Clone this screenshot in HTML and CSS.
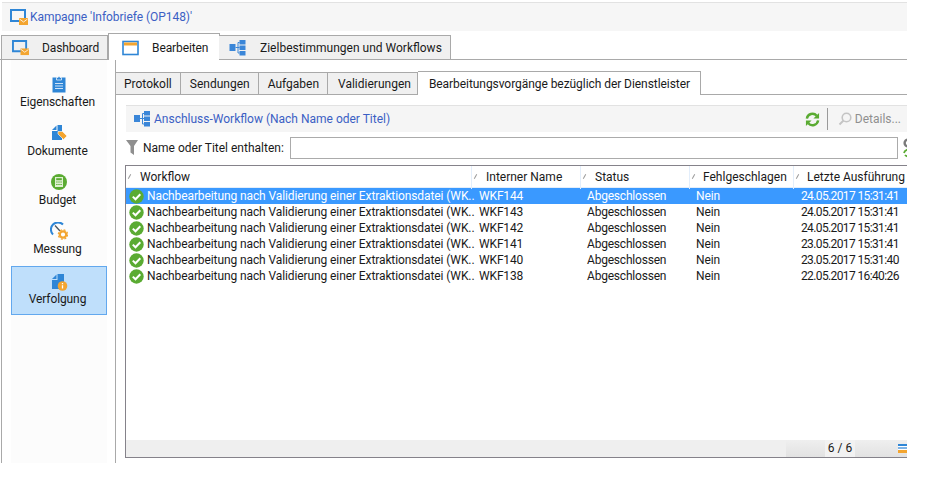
FILE: index.html
```html
<!DOCTYPE html>
<html lang="de">
<head>
<meta charset="utf-8">
<title>Kampagne</title>
<link rel="stylesheet" href="styles.css">
</head>
<body>
<svg class="defs" width="0" height="0" aria-hidden="true">
  <defs>
    <symbol id="flow" viewBox="0 0 16 16">
      <rect x="0" y="4" width="6" height="7" fill="#3a86d8"/>
      <path d="M6 7.5H8.5M8.5 2.5V13M8.5 2.5H10M8.5 7.5H10M8.5 13H10" stroke="#3a86d8" fill="none"/>
      <rect x="10" y="0" width="6" height="4.5" fill="#3a86d8"/>
      <rect x="10" y="5.5" width="6" height="4.5" fill="#3a86d8"/>
      <rect x="10" y="11" width="6" height="4.5" fill="#3a86d8"/>
    </symbol>
    <symbol id="monitor" viewBox="0 0 18 17">
      <path d="M1 1H15V12H1Z" fill="none" stroke="#2f86d6" stroke-width="2"/>
      <rect x="9" y="9" width="9" height="7" fill="#f3a530"/>
      <path d="M9.5 10l4 3 4-3" fill="none" stroke="#fff" stroke-width=".8"/>
    </symbol>
    <symbol id="ok" viewBox="0 0 15 15">
      <circle cx="7.5" cy="7.5" r="7.2" fill="#5aab32"/>
      <path d="M3.8 7.6l2.7 2.7 4.8-5" fill="none" stroke="#fff" stroke-width="2"/>
    </symbol>
  </defs>
</svg>
<div class="app">
  <header class="title">
    <svg class="ico-title"><use href="#monitor"/></svg>
    <span>Kampagne 'Infobriefe (OP148)'</span>
  </header>
  <nav class="tabs">
    <div class="tab tab-dash"><svg class="ico-tab"><use href="#monitor"/></svg>Dashboard</div>
    <div class="tab tab-edit active">
      <svg class="ico-tab" viewBox="0 0 17 15"><rect x="1" y="1" width="15" height="13" fill="#fff" stroke="#2f86d6" stroke-width="1.6"/><rect x="2" y="2" width="13" height="3" fill="#f3a530"/></svg>Bearbeiten
    </div>
    <div class="tab tab-goal"><svg class="ico-tab"><use href="#flow"/></svg>Zielbestimmungen und Workflows</div>
  </nav>
  <div class="body">
    <aside class="side">
      <div class="side-item">
        <svg class="side-ico" viewBox="0 0 18 18"><rect x="2.500" y="2.500" width="13" height="15" fill="#2f86d6"/><path d="M6.500 2.500H8a1 1 0 0 1 2 0h1.500V5h-5Z" fill="#2f86d6" stroke="#fff" stroke-width=".7"/><path d="M5 8.500h8M5 11h8M5 13.500h8" stroke="#cfe4f8"/></svg>
        <span>Eigenschaften</span>
      </div>
      <div class="side-item">
        <svg class="side-ico" viewBox="0 0 18 18"><path d="M2 6l4.500-4.500V6Z" fill="#2f86d6"/><path d="M7.500 1H12V16H2V7H7.500Z" fill="#2f86d6"/><path d="M8 10V7.500h4.500L17 12l-3.500 3.500Z" fill="#f3a530" stroke="#fff" stroke-width=".6"/></svg>
        <span>Dokumente</span>
      </div>
      <div class="side-item">
        <svg class="side-ico" viewBox="0 0 18 18"><circle cx="9" cy="9" r="8" fill="#5aab32"/><rect x="5" y="4" width="8" height="10" fill="#dff0d2"/><rect x="6.200" y="5.200" width="5.600" height="2" fill="#5aab32"/><path d="M6.200 9h5.600M6.200 11.500h5.600" stroke="#5aab32" stroke-dasharray="1.400 .7"/></svg>
        <span>Budget</span>
      </div>
      <div class="side-item">
        <svg class="side-ico" viewBox="0 0 18 18"><path d="M3 12.500A6.800 6.800 0 0 1 13 2.500" fill="none" stroke="#2f86d6" stroke-width="2"/><path d="M5 3.500l5 5.500" stroke="#4a5560" stroke-width="1.300"/><circle cx="13" cy="12.500" r="3.200" fill="#fff" stroke="#f3a530" stroke-width="2.200"/><circle cx="13" cy="12.500" r="4.700" fill="none" stroke="#f3a530" stroke-width="1.200" stroke-dasharray="2 1.700"/></svg>
        <span>Messung</span>
      </div>
      <div class="side-item selected">
        <svg class="side-ico" viewBox="0 0 18 18"><path d="M2 6l4.500-4.500V6Z" fill="#2f86d6"/><path d="M7.500 1H14V16H2V7H7.500Z" fill="#2f86d6"/><circle cx="12.500" cy="13" r="4.800" fill="#f3a530"/><path d="M12.500 10v1.300M12.500 12.300v3.200" stroke="#fff" stroke-width="1.300"/></svg>
        <span>Verfolgung</span>
      </div>
    </aside>
    <main class="main">
      <div class="subtabs">
        <div class="subtab">Protokoll</div>
        <div class="subtab">Sendungen</div>
        <div class="subtab">Aufgaben</div>
        <div class="subtab subtab-last">Validierungen</div>
        <div class="subtab active">Bearbeitungsvorgänge bezüglich der Dienstleister</div>
      </div>
      <div class="panel">
        <div class="toolbar">
          <svg class="ico-flow"><use href="#flow"/></svg>
          <span class="toolbar-title">Anschluss-Workflow (Nach Name oder Titel)</span>
          <svg class="ico-refresh" viewBox="0 0 16 16"><path d="M2 7A6 6 0 0 1 12.500 4M14 9A6 6 0 0 1 3.500 12" fill="none" stroke="#5aab32" stroke-width="2.600"/><path d="M15 1v6h-6ZM1 15V9h6Z" fill="#5aab32"/></svg>
          <span class="sep"></span>
          <svg class="ico-search" viewBox="0 0 14 14"><circle cx="8.500" cy="5.500" r="4.300" fill="none" stroke="#c4c4c4" stroke-width="1.600"/><path d="M5.500 8.500L1.500 12.500" stroke="#c4c4c4" stroke-width="2"/></svg>
          <span class="details">Details...</span>
        </div>
        <div class="filter">
          <svg class="ico-funnel" viewBox="0 0 12 15"><path d="M0 0H12L8 6V15L4.500 12.500V6Z" fill="#8f8f8f"/></svg>
          <label class="filter-label">Name oder Titel enthalten:</label>
          <div class="filter-input"></div>
          <div class="filter-tools">
            <svg class="ft" viewBox="0 0 10 10"><circle cx="5" cy="5" r="3.400" fill="none" stroke="#7a7a7a" stroke-width="2.400"/></svg>
            <svg class="ft" viewBox="0 0 10 10"><path d="M1 5A4 4 0 0 1 8 3M9 5A4 4 0 0 1 2 7" fill="none" stroke="#5aab32" stroke-width="1.800"/></svg>
          </div>
        </div>
        <div class="table">
          <div class="row head">
            <div class="th c1">Workflow</div>
            <div class="th c2">Interner Name</div>
            <div class="th c3">Status</div>
            <div class="th c4">Fehlgeschlagen</div>
            <div class="th c5">Letzte Ausführung</div>
          </div>
          <div class="row item sel">
            <div class="td c1"><svg class="ico-ok"><use href="#ok"/></svg>Nachbearbeitung nach Validierung einer Extraktionsdatei (WK..</div>
            <div class="td c2">WKF144</div><div class="td c3">Abgeschlossen</div><div class="td c4">Nein</div><div class="td c5">24.05.2017 15:31:41</div>
          </div>
          <div class="row item">
            <div class="td c1"><svg class="ico-ok"><use href="#ok"/></svg>Nachbearbeitung nach Validierung einer Extraktionsdatei (WK..</div>
            <div class="td c2">WKF143</div><div class="td c3">Abgeschlossen</div><div class="td c4">Nein</div><div class="td c5">24.05.2017 15:31:41</div>
          </div>
          <div class="row item">
            <div class="td c1"><svg class="ico-ok"><use href="#ok"/></svg>Nachbearbeitung nach Validierung einer Extraktionsdatei (WK..</div>
            <div class="td c2">WKF142</div><div class="td c3">Abgeschlossen</div><div class="td c4">Nein</div><div class="td c5">24.05.2017 15:31:41</div>
          </div>
          <div class="row item">
            <div class="td c1"><svg class="ico-ok"><use href="#ok"/></svg>Nachbearbeitung nach Validierung einer Extraktionsdatei (WK..</div>
            <div class="td c2">WKF141</div><div class="td c3">Abgeschlossen</div><div class="td c4">Nein</div><div class="td c5">23.05.2017 15:31:41</div>
          </div>
          <div class="row item">
            <div class="td c1"><svg class="ico-ok"><use href="#ok"/></svg>Nachbearbeitung nach Validierung einer Extraktionsdatei (WK..</div>
            <div class="td c2">WKF140</div><div class="td c3">Abgeschlossen</div><div class="td c4">Nein</div><div class="td c5">23.05.2017 15:31:40</div>
          </div>
          <div class="row item">
            <div class="td c1"><svg class="ico-ok"><use href="#ok"/></svg>Nachbearbeitung nach Validierung einer Extraktionsdatei (WK..</div>
            <div class="td c2">WKF138</div><div class="td c3">Abgeschlossen</div><div class="td c4">Nein</div><div class="td c5">22.05.2017 16:40:26</div>
          </div>
          <div class="spacer"></div>
          <div class="foot">
            <div class="pager"><span class="count">6 / 6</span><span class="lines"></span></div>
          </div>
        </div>
      </div>
    </main>
  </div>
</div>
</body>
</html>
```

FILE: styles.css
```css
* { box-sizing: border-box; }
html, body { margin: 0; height: 487px; background: #fff; overflow: hidden; }
body { font: 12px/16px Roboto, "Noto Sans", sans-serif; color: #1a1a1a; }
.defs { display: block; height: 0; }
.app { width: 907px; height: 463px; padding-top: 2px; display: flex; flex-direction: column; overflow: hidden; }

.title { height: 29px; flex: none; margin-left: 2px; border-top: 1px solid #e2e2e2; background: #f6f6f6; display: flex; align-items: center; padding-left: 8px; color: #3b5fc4; letter-spacing: -.05px; }
.ico-title { width: 18px; height: 17px; margin-right: 2px; }

.tabs { height: 29px; flex: none; display: flex; align-items: flex-end; border-bottom: 1px solid #a9a9a9; white-space: nowrap; }
.tab { height: 24px; padding-top: 1px; display: flex; align-items: center; background: #f0f0f0; border: 1px solid #a9a9a9; border-bottom: 0; border-left-width: 0; }
.tab.active { background: #fff; height: 27px; margin-bottom: -1px; border-left-width: 1px; padding-top: 2px; }
.tab-dash { width: 107px; padding-left: 10px; border-left-width: 1px; margin-left: 1px; letter-spacing: -.1px; }
.tab-edit { width: 112px; padding-left: 13px; letter-spacing: -.1px; }
.tab-goal { width: 232px; padding-left: 10px; margin-left: -1px; }
.ico-tab { width: 17px; height: 16px; margin-right: 13px; flex: none; }
.tab-goal .ico-tab { margin-right: 14px; }

.body { flex: 1; display: flex; min-height: 0; border-left: 1px solid #a9a9a9; margin-left: 1px; }
.side { width: 96px; margin-left: 9px; padding-top: 10px; background: #fcfcfc; flex: none; }
.side-item { height: 49px; display: flex; flex-direction: column; align-items: center; padding-top: 5px; }
.side-item span { line-height: 16px; margin-right: 3px; letter-spacing: -.1px; }
.side-ico { width: 18px; height: 18px; flex: none; margin-bottom: 1px; }
.side-item.selected { background: #bfdffb; border: 1px solid #62a8ee; padding-top: 6px; }
.selected .side-ico { margin-bottom: 0; }

.main { flex: 1; min-width: 0; margin-left: 8px; border-left: 1px solid #a9a9a9; display: flex; flex-direction: column; }
.subtabs { margin-top: 12px; height: 23px; flex: none; display: flex; align-items: flex-end; border-bottom: 1px solid #a9a9a9; white-space: nowrap; }
.subtab { height: 22px; padding: 0 8px 0 9px; display: flex; align-items: center; background: #f0f0f0; border: 1px solid #a9a9a9; border-left-width: 0; border-bottom: 0; }
.subtab:first-child { border-left-width: 1px; margin-left: -1px; padding-left: 8px; }
.subtab-last { padding: 0 6px 0 10px; }
.subtab.active { background: #fff; height: 24px; margin-bottom: -1px; padding: 0 10px 0 11px; letter-spacing: -.06px; }

.panel { flex: 1; min-height: 0; display: flex; flex-direction: column; padding: 10px 0 5px 9px; }
.toolbar { height: 27px; flex: none; margin-left: 1px; border-top: 1px solid #e2e2e2; background: #f5f5f5; display: flex; align-items: center; padding-left: 8px; }
.ico-flow { width: 16px; height: 16px; margin-right: 4px; flex: none; }
.toolbar-title { color: #3b5fc4; flex: 1; }
.ico-refresh { width: 15px; height: 15px; margin-right: 7px; }
.sep { width: 1px; height: 22px; background: #9a9a9a; margin-right: 10px; }
.ico-search { width: 14px; height: 14px; margin-right: 3px; }
.details { color: #8f8f8f; margin-right: 6px; }

.filter { height: 21px; margin-top: 5px; flex: none; display: flex; align-items: center; padding-left: 1px; }
.ico-funnel { width: 12px; height: 15px; flex: none; margin-right: 5px; }
.filter-label { width: 147px; flex: none; white-space: nowrap; }
.filter-input { width: 608px; height: 22px; flex: none; background: #fff; border: 1px solid #ababab; }
.filter-tools { display: flex; flex-direction: column; margin-left: 5px; }
.ft { width: 10px; height: 10px; }

.table { flex: 1; min-height: 0; margin-top: 7px; border: 1px solid #85828a; border-right: 0; display: flex; flex-direction: column; overflow: hidden; }
.row { display: grid; grid-template-columns: 346px 109px 109px 104px 114px; flex: none; }
.head { height: 22px; border-bottom: 1px solid #e3eefb; }
.th { position: relative; padding-left: 14px; line-height: 23px; border-right: 1px solid #e3eefb; white-space: nowrap; }
.th::before { content: ""; position: absolute; left: 3px; top: 8px; width: 1px; height: 5px; background: #9a9a9a; transform: rotate(30deg); }
.th.c4, .th.c5 { padding-left: 13px; }
.th.c5 { border-right: 0; }
.item { height: 16px; letter-spacing: -.08px; }
.td { white-space: nowrap; overflow: hidden; }
.td.c1 { display: flex; align-items: center; padding-left: 3px; overflow: visible; letter-spacing: -.1px; }
.td.c2 { padding-left: 7px; letter-spacing: -.15px; }
.td.c3 { padding-left: 6px; letter-spacing: -.2px; }
.td.c4 { padding-left: 6px; }
.td.c5 { padding-left: 7px; letter-spacing: -.62px; }
.ico-ok { width: 15px; height: 15px; margin-right: 3px; flex: none; }
.sel { background: #3a99ff; color: #fff; }
.spacer { flex: 1; }
.foot { height: 17px; flex: none; background: #efefef; display: flex; justify-content: flex-end; }
.pager { width: 121px; display: flex; background: linear-gradient(#efefef, #e2e2e2); justify-content: flex-end; align-items: center; }
.count { width: 30px; height: 17px; line-height: 17px; text-align: center; background: #f2f2f2; margin-right: 43px; }
.lines { width: 9px; height: 9px; background: linear-gradient(#2f86d6 0 2px, #fff 2px 3px, #7fb4e6 3px 5px, #fff 5px 6px, #f3a530 6px); }
```
